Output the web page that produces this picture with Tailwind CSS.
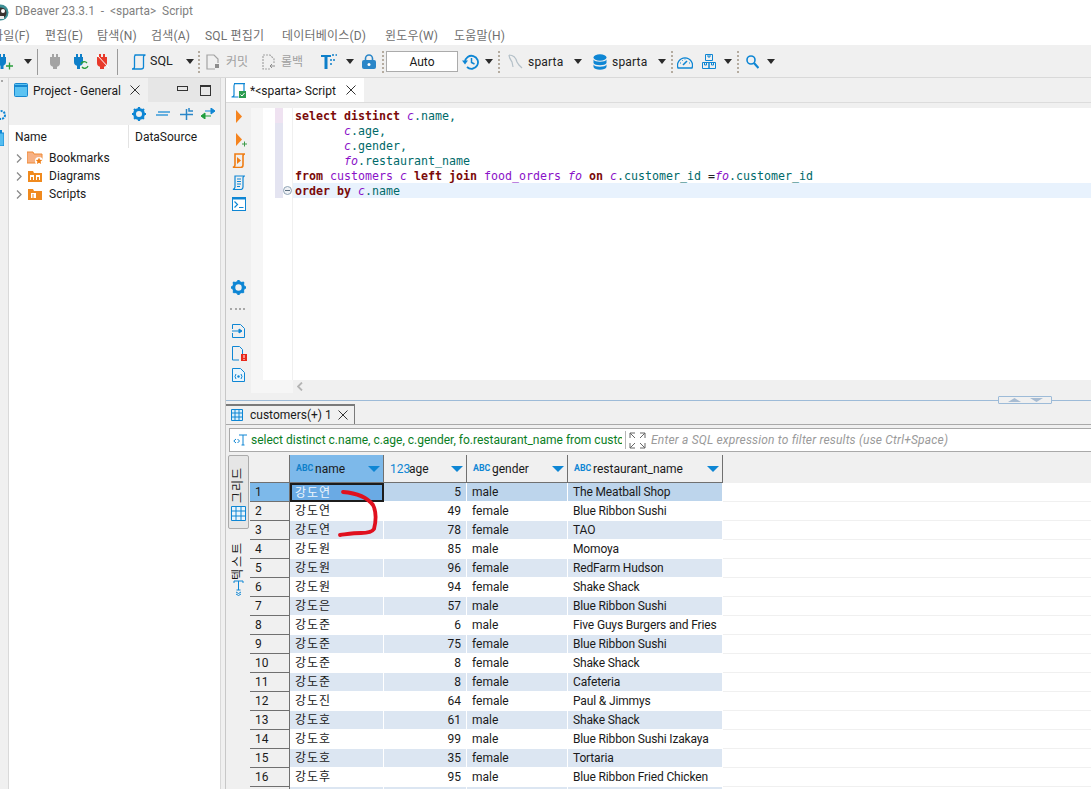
<!DOCTYPE html>
<html lang="ko">
<head>
  <meta charset="utf-8" />
  <title>DBeaver 23.3.1 - &lt;sparta&gt; Script</title>
  <script src="https://cdn.jsdelivr.net/npm/@tailwindcss/browser@4"></script>
</head>
<body class="bg-[#f0f0f0] text-[#1a1a1a] text-[12px] font-['Roboto','Noto_Sans_CJK_KR',sans-serif]">
<div class="relative w-[1091px] h-[789px] overflow-hidden flex flex-col">

  <!-- title bar -->
  <div class="h-[22px] pt-[2px] bg-white flex items-center text-[#7f7f7f] shrink-0">
    <svg class="ml-[-8px] shrink-0" width="17" height="17" viewBox="0 0 17 17"><circle cx="8.500" cy="8.500" r="8" fill="#3d8f95"/><circle cx="9" cy="9" r="5.500" fill="#3a3330"/><circle cx="11" cy="7" r="2" fill="#fff"/><path d="M7 12h5v3H7z" fill="#eee"/></svg>
    <span class="ml-[6px] whitespace-pre text-[11.900px]">DBeaver 23.3.1  -  &lt;sparta&gt;  Script</span>
  </div>

  <!-- menu -->
  <div class="h-[23px] pt-[5px] bg-white flex items-center text-[#6f6f6f] shrink-0 whitespace-nowrap tracking-[0.2px]">
    <span class="ml-[-8px] w-[53px]">파일(F)</span>
    <span class="w-[52px]">편집(E)</span>
    <span class="w-[54px]">탐색(N)</span>
    <span class="w-[54px]">검색(A)</span>
    <span class="w-[77px]">SQL 편집기</span>
    <span class="w-[103px]">데이터베이스(D)</span>
    <span class="w-[69px]">윈도우(W)</span>
    <span>도움말(H)</span>
  </div>

  <!-- main toolbar -->
  <div class="h-[33px] pt-[1px] flex items-center border-b border-[#d9d9d9] shrink-0 whitespace-nowrap">
    <svg class="ml-[-2px] shrink-0" width="15" height="16" viewBox="0 0 15 16"><path d="M1 0h2v3h2V0h2v3h1v5a4 4 0 0 1-2.500 3.800V15h-3v-3.200A4 4 0 0 1 0 8V3h1z" fill="#0e7fc9"/><path d="M8 12h7M11.500 8.500v7" stroke="#2a9d3c" stroke-width="1.300"/></svg>
    <svg class="ml-[11px] shrink-0" width="8" height="5" viewBox="0 0 8 5"><path d="M0 0h8L4 5z" fill="#2b2b2b"/></svg>
    <div class="ml-[5px] w-px h-[26px] bg-[#9a9a9a] shrink-0"></div>
    <svg class="ml-[12px] shrink-0" width="10" height="15" viewBox="0 0 10 15"><path d="M2 0h2v3h2V0h2v3h2v6a4 4 0 0 1-3 3.800V15H3v-2.200A4 4 0 0 1 0 9V3h2z" fill="#a3a3a3"/></svg>
    <svg class="ml-[13px] shrink-0" width="16" height="16" viewBox="0 0 16 16"><path d="M3 0h2v3h2V0h2v3h1v5a4 4 0 0 1-3 3.800V15H4v-3.200A4 4 0 0 1 1 8V3h2z" fill="#0e7fc9"/><path d="M8 10a3.500 3.500 0 0 1 6-1M15 12a3.500 3.500 0 0 1-6 1" fill="none" stroke="#2a9d3c" stroke-width="1.300"/></svg>
    <svg class="ml-[8px] shrink-0" width="12" height="15" viewBox="0 0 12 15"><path d="M2 0h2v3h2V0h2v3h2v6a4 4 0 0 1-3 3.800V15H3v-2.200A4 4 0 0 1 0 9V3h2z" fill="#e8392a"/><path d="M0 1l12 13" stroke="#fff" stroke-width="1"/></svg>
    <div class="ml-[8px] w-px h-[26px] bg-[#9a9a9a] shrink-0"></div>
    <svg class="ml-[13px] shrink-0" width="16" height="16" viewBox="0 0 16 16"><path d="M3.500 1h11M5 1c-1 0-1.500 1-1.500 2v10c0 1-1 2-2.500 2h9c1.500 0 2.500-1 2.500-2V3c0-1 1-2 2-2" fill="none" stroke="#0e86d4" stroke-width="1.300"/></svg>
    <span class="ml-[3px] w-[22px] text-[#222] text-[12.500px]">SQL</span>
    <svg class="ml-[14px] shrink-0" width="8" height="5" viewBox="0 0 8 5"><path d="M0 0h8L4 5z" fill="#2b2b2b"/></svg>
    <div class="ml-[4px] w-[2px] h-[22px] border-l-2 border-dotted border-[#b5aca0] shrink-0"></div>
    <svg class="ml-[6px] shrink-0" width="14" height="16" viewBox="0 0 14 16"><path d="M9 15H1V1h7l4 4v4" fill="none" stroke="#a3a3a3" stroke-width="1.200"/><path d="M9 10h4v4H9z" fill="#8d8d8d"/></svg>
    <span class="ml-[6px] w-[22px] text-[#a0a0a0]">커밋</span>
    <svg class="ml-[14px] shrink-0" width="14" height="16" viewBox="0 0 14 16"><path d="M8 15H1V1h7l4 4v4" fill="none" stroke="#a3a3a3" stroke-width="1.200" stroke-dasharray="2 1"/><path d="M8 12h5M10 10l-2 2 2 2" fill="none" stroke="#8d8d8d"/></svg>
    <span class="ml-[5px] w-[22px] text-[#a0a0a0]">롤백</span>
    <svg class="ml-[18px] shrink-0" width="16" height="16" viewBox="0 0 16 16"><path d="M0 1h10v2H6.500v12h-3V3H0z" fill="#0e7fc9"/><path d="M11 1h2M14.500 1h1.500M9 6h2M9 10h2M12 6h2" stroke="#0e7fc9" stroke-width="1.600"/></svg>
    <svg class="ml-[9px] shrink-0" width="8" height="5" viewBox="0 0 8 5"><path d="M0 0h8L4 5z" fill="#2b2b2b"/></svg>
    <svg class="ml-[8px] shrink-0" width="14" height="15" viewBox="0 0 14 15"><path d="M3.500 7V4.500a3.500 3.500 0 0 1 7 0V7" fill="none" stroke="#2a86c8" stroke-width="1.600"/><rect y="6" width="14" height="9" rx="2" fill="#2a86c8"/><circle cx="7" cy="10.500" r="1.500" fill="#fff"/></svg>
    <div class="ml-[6px] w-[2px] h-[22px] border-l-2 border-dotted border-[#b5aca0] shrink-0"></div>
    <div class="ml-[2px] w-[72px] h-[21px] bg-white border border-[#ababab] flex items-center justify-center shrink-0">Auto</div>
    <svg class="ml-[4px] shrink-0" width="17" height="16" viewBox="0 0 17 16"><path d="M3 8a6.500 6.500 0 1 1 2 5" fill="none" stroke="#0e86d4" stroke-width="1.800"/><path d="M0 6.500h6L3 10.500z" fill="#0e86d4"/><path d="M9.500 4v4.500l3 1.500" fill="none" stroke="#0e86d4" stroke-width="1.500"/></svg>
    <svg class="ml-[6px] shrink-0" width="8" height="5" viewBox="0 0 8 5"><path d="M0 0h8L4 5z" fill="#2b2b2b"/></svg>
    <div class="ml-[5px] w-[2px] h-[22px] border-l-2 border-dotted border-[#b5aca0] shrink-0"></div>
    <svg class="ml-[8px] shrink-0" width="15" height="15" viewBox="0 0 15 15"><path d="M1 1c4 0 7 3 8 7l2 3 3 3M1 1c0 3 2 5 3 7l1 5" fill="none" stroke="#b4c0c8" stroke-width="1.200"/></svg>
    <span class="ml-[5px] w-[32px] text-[#222] tracking-[0.2px]">sparta</span>
    <svg class="ml-[14px] shrink-0" width="8" height="5" viewBox="0 0 8 5"><path d="M0 0h8L4 5z" fill="#2b2b2b"/></svg>
    <svg class="ml-[11px] shrink-0" width="14" height="16" viewBox="0 0 14 16"><ellipse cx="7" cy="3.500" rx="6.500" ry="3.300" fill="#0e86d4"/><path d="M.5 5.500c1 3 12 3 13 0v3.500c-1 3-12 3-13 0zM.5 10.500c1 3 12 3 13 0V13c-1 3.500-12 3.500-13 0z" fill="#0e86d4"/></svg>
    <span class="ml-[5px] w-[32px] text-[#222] tracking-[0.2px]">sparta</span>
    <svg class="ml-[14px] shrink-0" width="8" height="5" viewBox="0 0 8 5"><path d="M0 0h8L4 5z" fill="#2b2b2b"/></svg>
    <div class="ml-[5px] w-[2px] h-[22px] border-l-2 border-dotted border-[#b5aca0] shrink-0"></div>
    <svg class="ml-[4px] shrink-0" width="16" height="14" viewBox="0 0 16 14"><path d="M1 13a7.500 7.500 0 1 1 14 0z" fill="none" stroke="#0e86d4" stroke-width="1.300"/><path d="M6 10l4-4" stroke="#0e86d4" stroke-width="1.600"/><path d="M3 8h1M5 5l.7.7M8 3.500v1M12 8h1" stroke="#0e86d4"/></svg>
    <svg class="ml-[9px] shrink-0" width="14" height="15" viewBox="0 0 14 15"><path d="M3.500.5h7v6h-7zM.5 8.500h6.500v6H.5zM7 8.500h6.500v6H7z" fill="none" stroke="#0e86d4"/><path d="M6 .5v2.500h2V.5M2.500 8.500V11h2V8.500M9.500 8.500V11h2V8.500" fill="none" stroke="#0e86d4"/></svg>
    <svg class="ml-[8px] shrink-0" width="8" height="5" viewBox="0 0 8 5"><path d="M0 0h8L4 5z" fill="#2b2b2b"/></svg>
    <div class="ml-[5px] w-[2px] h-[22px] border-l-2 border-dotted border-[#b5aca0] shrink-0"></div>
    <svg class="ml-[7px] shrink-0" width="13" height="14" viewBox="0 0 13 14"><circle cx="5" cy="5" r="4" fill="none" stroke="#0e86d4" stroke-width="1.600"/><path d="M8 8l4.500 5" stroke="#0e86d4" stroke-width="2.200"/></svg>
    <svg class="ml-[8px] shrink-0" width="8" height="5" viewBox="0 0 8 5"><path d="M0 0h8L4 5z" fill="#2b2b2b"/></svg>
  </div>

  <div class="flex-1 flex min-h-0">
    <!-- left edge strip, trimmed perspective icons -->
    <div class="w-[8px] shrink-0 flex flex-col">
      <div class="mt-[2px] ml-px w-[2px] h-[2px] bg-[#a8a8a8]"></div>
      <svg class="mt-[28px] ml-[-5px]" width="12" height="10" viewBox="0 0 12 10"><circle cx="6" cy="5" r="4" fill="none" stroke="#0e86d4" stroke-width="2" stroke-dasharray="2 1"/></svg>
      <svg class="mt-[10px] ml-[-8px]" width="12" height="16" viewBox="0 0 12 16"><rect y="3" width="12" height="13" fill="#55bdf0" stroke="#0e86d4"/><path d="M5 0h5v3H5z" fill="#0e86d4"/></svg>
    </div>

    <!-- project panel -->
    <div class="w-[213px] shrink-0 flex flex-col border-l border-r border-[#d9d9d9]">
      <div class="h-[24px] flex shrink-0 bg-[#e6e6e6]">
        <div class="w-[139px] bg-[#f0f0f0] flex items-center shrink-0">
          <svg class="ml-[5px] shrink-0" width="14" height="14" viewBox="0 0 14 14"><rect x=".5" y=".5" width="13" height="13" rx="1" fill="#5cc3f2" stroke="#1787cf"/><path d="M1 3h12" stroke="#1787cf" stroke-width="2"/></svg>
          <span class="ml-[5px] w-[97px] whitespace-nowrap pt-[1px]">Project - General</span>
          <svg class="shrink-0" width="10" height="10" viewBox="0 0 10 10"><path d="M.5.5l9 9M9.500.5l-9 9" stroke="#333"/></svg>
        </div>
        <div class="ml-[29px] w-[11px] h-[5px] mt-[8px] border border-[#333] shrink-0"></div>
        <div class="ml-[12px] w-[11px] h-[11px] mt-[7px] border border-[#333] border-t-2 shrink-0"></div>
      </div>
      <div class="h-[23px] flex items-center bg-[#f0f0f0] shrink-0">
        <svg class="ml-[123px] shrink-0" width="14" height="14" viewBox="0 0 14 14"><circle cx="7" cy="7" r="4.500" fill="none" stroke="#0e86d4" stroke-width="3"/><path d="M7 0v14M0 7h14M2 2l10 10M12 2L2 12" stroke="#0e86d4" stroke-width="2.200" stroke-dasharray="2.500 9"/></svg>
        <svg class="ml-[10px] shrink-0" width="14" height="6" viewBox="0 0 14 6"><path d="M2 1h12M0 4h12" stroke="#3a9ad9" stroke-width="1.400"/></svg>
        <svg class="ml-[10px] shrink-0" width="13" height="13" viewBox="0 0 13 13"><path d="M0 7.500h13M6.500 2v11M9 1v3h4" fill="none" stroke="#2a86c8" stroke-width="1.500"/></svg>
        <svg class="ml-[7px] shrink-0" width="16" height="11" viewBox="0 0 16 11"><path d="M5 3h9M11 0l4 3-4 3z" fill="#0e86d4" stroke="#0e86d4"/><path d="M11 8H2M5 5L1 8l4 3z" fill="#1f9d3d" stroke="#1f9d3d"/></svg>
      </div>
      <div class="flex-1 bg-white">
        <div class="h-[23px] flex items-center">
          <span class="ml-[6px] w-[113px]">Name</span>
          <div class="w-px h-[23px] bg-[#e3e3e3]"></div>
          <span class="ml-[6px]">DataSource</span>
        </div>
        <div class="pt-[1px]">
          <div class="h-[18px] flex items-center">
            <svg class="ml-[7px] shrink-0" width="6" height="9" viewBox="0 0 6 9"><path d="M1 .5l4 4-4 4" fill="none" stroke="#8a8a8a" stroke-width="1.300"/></svg>
            <svg class="ml-[5px] shrink-0" width="16" height="14" viewBox="0 0 16 14"><path d="M0 1h6l1 2h8v9H0z" fill="#f7b184" stroke="#ef8a34"/><circle cx="12" cy="10" r="4" fill="#fff"/><path d="M12 6.500l1 2.300 2.300.2-1.700 1.600.5 2.400-2.100-1.200-2.100 1.200.5-2.400L8.700 9l2.300-.2z" fill="#ef7d14"/></svg>
            <span class="ml-[6px]">Bookmarks</span>
          </div>
          <div class="h-[18px] flex items-center">
            <svg class="ml-[7px] shrink-0" width="6" height="9" viewBox="0 0 6 9"><path d="M1 .5l4 4-4 4" fill="none" stroke="#8a8a8a" stroke-width="1.300"/></svg>
            <svg class="ml-[5px] shrink-0" width="16" height="13" viewBox="0 0 16 13"><path d="M1 1h5l1 2h8v9H1z" fill="#f08a1e"/><path d="M3 5h4v5H3zM9 5h4v5H9z" fill="#fff"/><path d="M4 7h2v3H4zM10 7h2v3h-2z" fill="#f08a1e"/></svg>
            <span class="ml-[6px]">Diagrams</span>
          </div>
          <div class="h-[18px] flex items-center">
            <svg class="ml-[7px] shrink-0" width="6" height="9" viewBox="0 0 6 9"><path d="M1 .5l4 4-4 4" fill="none" stroke="#8a8a8a" stroke-width="1.300"/></svg>
            <svg class="ml-[5px] shrink-0" width="16" height="13" viewBox="0 0 16 13"><path d="M1 1h5l1 2h8v9H1z" fill="#f08a1e"/><path d="M4 5h5v5H4z" fill="#fff"/><path d="M6 6v4" stroke="#f08a1e"/></svg>
            <span class="ml-[6px]">Scripts</span>
          </div>
        </div>
      </div>
    </div>

    <!-- right side -->
    <div class="flex-1 min-w-0 ml-[4px] border-l border-[#c8c8c8] flex flex-col">
      <div class="h-[25px] flex border-b border-[#dcdcdc] shrink-0">
        <div class="w-[138px] h-[24px] bg-white flex items-center">
          <svg class="ml-[5px] shrink-0" width="15" height="15" viewBox="0 0 15 15"><path d="M3 .7h11M4 1C3 1 3 2 3 3v9c0 1-1 2-2.500 2h7" fill="none" stroke="#0e86d4" stroke-width="1.200"/><path d="M13 1v7" stroke="#0e86d4" stroke-width="1.200"/><rect x="8" y="8" width="7" height="7" fill="#2c9c50"/><path d="M9.500 11.500l1.500 1.500 2.500-3" fill="none" stroke="#fff"/></svg>
          <span class="ml-[4px] w-[96px] whitespace-nowrap pt-[1px]">*&lt;sparta&gt; Script</span>
          <svg class="shrink-0" width="10" height="10" viewBox="0 0 10 10"><path d="M.5.5l9 9M9.500.5l-9 9" stroke="#333"/></svg>
        </div>
      </div>
      <div class="h-[5px] shrink-0"></div>

      <!-- SQL editor -->
      <div class="h-[285px] flex shrink-0">
        <div class="w-[25px] flex flex-col shrink-0 items-start">
          <svg class="ml-[10px] mt-[2px]" width="6" height="13" viewBox="0 0 6 13"><path d="M0 0l6 6.500L0 13z" fill="#f5841f"/></svg>
          <svg class="ml-[10px] mt-[10px]" width="11" height="14" viewBox="0 0 11 14"><path d="M0 0l6 6.500L0 13z" fill="#f5841f"/><path d="M6 11h5M8.500 8.500v5" stroke="#3b9a49"/></svg>
          <svg class="ml-[6px] mt-[6px]" width="14" height="15" viewBox="0 0 14 15"><path d="M3 1h10c-1.500 0-2 1-2 2v9c0 1.500-1 2.500-2.500 2.500H1C2 14 3 13 3 12z" fill="none" stroke="#ef7d14" stroke-width="1.600"/><path d="M5 4l4 3.500L5 11z" fill="#ef7d14"/></svg>
          <svg class="ml-[6px] mt-[7px]" width="14" height="15" viewBox="0 0 14 15"><path d="M3 1h10c-1.500 0-2 1-2 2v9c0 1.500-1 2.500-2.500 2.500H1C2 14 3 13 3 12z" fill="none" stroke="#0e86d4" stroke-width="1.200"/><path d="M5 4h4M5 6.500h4M5 9h4M5 11.500h3" stroke="#0e86d4"/></svg>
          <svg class="ml-[6px] mt-[7px]" width="14" height="14" viewBox="0 0 14 14"><rect x=".5" y=".5" width="13" height="13" fill="#fff" stroke="#0e86d4"/><path d="M0 1.500h14" stroke="#0e86d4" stroke-width="2"/><path d="M2.500 4.500l3 3-3 3M7 10.500h4.500" fill="none" stroke="#0e86d4" stroke-width="1.200"/></svg>
          <svg class="ml-[5px] mt-[69px]" width="15" height="15" viewBox="0 0 14 14"><circle cx="7" cy="7" r="4.500" fill="none" stroke="#0e86d4" stroke-width="3"/><path d="M7 0v14M0 7h14M2 2l10 10M12 2L2 12" stroke="#0e86d4" stroke-width="2.200" stroke-dasharray="2.500 9"/></svg>
          <div class="ml-[4px] mt-[13px] w-[15px] border-t-2 border-dotted border-[#a8a8a8]"></div>
          <svg class="ml-[6px] mt-[14px]" width="13" height="14" viewBox="0 0 13 14"><path d="M.5 5V.5h8l4 4v9H.5V9" fill="none" stroke="#0e86d4"/><path d="M0 7h9M7 5l3 2-3 2z" fill="#0e86d4" stroke="#0e86d4"/></svg>
          <svg class="ml-[6px] mt-[8px]" width="15" height="15" viewBox="0 0 15 15"><path d="M7 14H.5V.5h7l3 3V8" fill="none" stroke="#0e86d4"/><rect x="9" y="8" width="6" height="7" fill="#e8291c"/><path d="M12 9v3M12 13v1" stroke="#fff"/></svg>
          <svg class="ml-[6px] mt-[7px]" width="13" height="14" viewBox="0 0 13 14"><path d="M.5.500h8l4 4v9H.5z" fill="#eaf5fc" stroke="#0e86d4"/><path d="M4 6L3 8.500 4 11M9 6l1 2.500L9 11" fill="none" stroke="#0e86d4"/><circle cx="6.500" cy="8.500" r="1.200" fill="#0e86d4"/></svg>
        </div>
        <div class="w-[12px] bg-[#f6f6f6] shrink-0"></div>
        <div class="flex-1 min-w-0 flex flex-col">
          <div class="h-[272px] flex bg-white shrink-0">
            <div class="relative w-[30px] shrink-0 border-r border-[#f0f0f0]">
              <div class="ml-[12px] w-[8px] h-[15px] bg-[#efe2f1]"></div>
              <div class="ml-[12px] w-[8px] h-[75px] bg-[#e4e4f1]"></div>
              <div class="absolute left-[20px] top-[78px] w-[9px] h-[9px] rounded-full border border-[#8fa3b5] bg-[#eef1f5] flex items-center justify-center"><div class="w-[5px] h-px bg-[#5c6f80]"></div></div>
            </div>
            <pre class="flex-1 min-w-0 text-[11.630px] leading-[17px] font-['DejaVu_Sans_Mono',monospace] text-[#006a6a]"><div class="pl-[2px] h-[15px]"><b class="text-[#7a0a0a]">select distinct</b> <i class="text-[#8a12c8]">c</i>.name,</div><div class="pl-[2px] h-[15px]">       <i class="text-[#8a12c8]">c</i>.age,</div><div class="pl-[2px] h-[15px]">       <i class="text-[#8a12c8]">c</i>.gender,</div><div class="pl-[2px] h-[15px]">       <i class="text-[#8a12c8]">fo</i>.restaurant_name</div><div class="pl-[2px] h-[15px]"><b class="text-[#7a0a0a]">from</b> <span class="text-[#8a12c8]">customers</span> <i class="text-[#8a12c8]">c</i> <b class="text-[#7a0a0a]">left join</b> <span class="text-[#8a12c8]">food_orders</span> <i class="text-[#8a12c8]">fo</i> <b class="text-[#7a0a0a]">on</b> <i class="text-[#8a12c8]">c</i>.customer_id <span class="text-[#222]">=</span><i class="text-[#8a12c8]">fo</i>.customer_id</div><div class="pl-[2px] h-[15px] bg-[#e8f2fd]"><b class="text-[#7a0a0a]">order by</b> <i class="text-[#8a12c8]">c</i>.name</div></pre>
          </div>
          <div class="h-[13px] flex shrink-0">
            <div class="w-[30px] bg-[#f6f6f6] shrink-0"></div>
            <svg class="ml-[4px] mt-[2px]" width="6" height="9" viewBox="0 0 6 9"><path d="M5 .5L1 4.500l4 4" fill="none" stroke="#b4b4b4" stroke-width="1.800"/></svg>
          </div>
        </div>
      </div>

      <!-- sash -->
      <div class="h-[11px] shrink-0">
        <div class="mt-[3px] h-[8px] flex items-center">
          <div class="w-[772px] h-px bg-[#9dbbd8]"></div>
          <div class="w-[54px] h-[8px] border border-[#9dbbd8] rounded-[1px] flex items-center justify-center gap-[9px] shrink-0">
            <svg width="13" height="4" viewBox="0 0 13 4"><path d="M0 4h13L6.500 0z" fill="#a8bcd2"/></svg>
            <svg width="13" height="4" viewBox="0 0 13 4"><path d="M0 0h13L6.500 4z" fill="#a8bcd2"/></svg>
          </div>
          <div class="flex-1 h-px bg-[#9dbbd8]"></div>
        </div>
      </div>

      <!-- results tab -->
      <div class="h-[21px] flex border-b border-[#a9a9a9] shrink-0">
        <div class="w-[129px] h-[20px] border-t-2 border-r border-[#7a7a7a] flex items-center">
          <svg class="ml-[5px] shrink-0" width="12" height="12" viewBox="0 0 12 12"><path d="M.5.500h11v11H.5zM4 .5v11M8 .5v11M.5 4h11M.5 8h11" fill="#d9effb" stroke="#0e86d4"/></svg>
          <span class="ml-[7px] w-[88px] whitespace-nowrap">customers(+) 1</span>
          <svg class="shrink-0" width="10" height="10" viewBox="0 0 10 10"><path d="M.5.5l9 9M9.500.5l-9 9" stroke="#333"/></svg>
        </div>
      </div>

      <!-- filter -->
      <div class="mt-[3px] ml-[3px] h-[24px] bg-white border border-[#a9a9a9] border-r-0 flex items-center shrink-0 whitespace-nowrap">
        <svg class="ml-[3px] shrink-0" width="14" height="12" viewBox="0 0 14 12"><path d="M3 5L.8 7 3 9M4.500 5l2 2-2 2" fill="none" stroke="#0e86d4"/><path d="M6 1h8M10 1v10M8.500 11h3" fill="none" stroke="#0e86d4"/></svg>
        <div class="ml-[4px] w-[371px] overflow-hidden text-[#0a7d1e] shrink-0">select distinct c.name, c.age, c.gender, fo.restaurant_name from customers c</div>
        <div class="ml-[3px] w-px h-[18px] bg-[#b5b5b5] shrink-0"></div>
        <svg class="ml-[3px] shrink-0" width="17" height="17" viewBox="0 0 17 17"><path d="M1 6V1h5M16 6V1h-5M1 11v5h5M16 11v5h-5M1 1l5 5M16 1l-5 5M1 16l5-5M16 16l-5-5" fill="none" stroke="#666"/></svg>
        <span class="ml-[5px] italic text-[#9a9a9a] tracking-[0.18px]">Enter a SQL expression to filter results (use Ctrl+Space)</span>
      </div>

      <!-- result grid -->
      <div class="mt-[3px] flex flex-1 min-h-0">
        <div class="ml-[1px] mr-px w-[22px] shrink-0 flex flex-col items-center">
          <div class="w-[21px] h-[74px] bg-[#e6e6e6] border border-[#ababab] rounded-[2px] flex flex-col items-center shrink-0">
            <span class="mt-[8px] h-[39px] [writing-mode:vertical-rl] [text-orientation:sideways] rotate-180 leading-[19px] tracking-[1px]">그리드</span>
            <svg class="mt-[3px]" width="15" height="15" viewBox="0 0 15 15"><path d="M.5.500h14v14H.5zM5 .5v14M10 .5v14M.5 5h14M.5 10h14" fill="#e9f5fc" stroke="#0e86d4"/></svg>
          </div>
          <span class="mt-[10px] h-[41px] [writing-mode:vertical-rl] [text-orientation:sideways] rotate-180 leading-[19px] tracking-[2px]">텍스트</span>
          <svg width="13" height="16" viewBox="0 0 13 16"><path d="M2 1h9M6.500 1v9M4.500 10h4M2 1v2M11 1v2" fill="none" stroke="#0e86d4"/><path d="M4 12l2.500 1.500L9 12M4 14l2.500 1.500L9 14" fill="none" stroke="#0e86d4"/></svg>
        </div>
        <div id="result-grid" class="flex-1 min-w-0 grid grid-cols-[40px_94px_83px_101px_155px_1fr] auto-rows-[19px] [grid-template-rows:28px] content-start">
          <div class="bg-[#f0f0f0] border-r border-b border-[#707070]"></div>
          <div class="bg-[#7db9ea] border-r border-b border-[#707070] flex items-center">
            <span class="ml-[6px] w-[19px] text-[8.800px] font-bold text-[#0e7fc9]">ABC</span><span class="flex-1">name</span>
            <svg class="mr-[3px]" width="12" height="6" viewBox="0 0 12 6"><path d="M0 0h12L6 6z" fill="#0e86d4"/></svg>
          </div>
          <div class="border-r border-b border-[#707070] flex items-center">
            <span class="ml-[6px] w-[19px] text-[#0e86d4]">123</span><span class="flex-1">age</span>
            <svg class="mr-[3px]" width="12" height="6" viewBox="0 0 12 6"><path d="M0 0h12L6 6z" fill="#0e86d4"/></svg>
          </div>
          <div class="border-r border-b border-[#707070] flex items-center">
            <span class="ml-[6px] w-[19px] text-[8.800px] font-bold text-[#0e86d4]">ABC</span><span class="flex-1">gender</span>
            <svg class="mr-[3px]" width="12" height="6" viewBox="0 0 12 6"><path d="M0 0h12L6 6z" fill="#0e86d4"/></svg>
          </div>
          <div class="border-r border-b border-[#707070] flex items-center">
            <span class="ml-[6px] w-[19px] text-[8.800px] font-bold text-[#0e86d4]">ABC</span><span class="flex-1">restaurant_name</span>
            <svg class="mr-[3px]" width="12" height="6" viewBox="0 0 12 6"><path d="M0 0h12L6 6z" fill="#0e86d4"/></svg>
          </div>
          <div></div>
        </div>
      </div>
    </div>
  </div>

  <!-- hand-drawn annotation on top of the screenshot -->
  <svg class="absolute left-[335px] top-[488px]" width="45" height="52" viewBox="0 0 45 52"><path d="M8 4C20 5 32 9 38 17c3 6 3 16 1 24-2 3-8 4-13 4-7 0-13 1-21 2" fill="none" stroke="#e0101e" stroke-width="3.800" stroke-linecap="round"/></svg>
</div>

<script>
  const rows = [
    ['강도연', 5, 'male', 'The Meatball Shop'],
    ['강도연', 49, 'female', 'Blue Ribbon Sushi'],
    ['강도연', 78, 'female', 'TAO'],
    ['강도원', 85, 'male', 'Momoya'],
    ['강도원', 96, 'female', 'RedFarm Hudson'],
    ['강도원', 94, 'female', 'Shake Shack'],
    ['강도은', 57, 'male', 'Blue Ribbon Sushi'],
    ['강도준', 6, 'male', 'Five Guys Burgers and Fries'],
    ['강도준', 75, 'female', 'Blue Ribbon Sushi'],
    ['강도준', 8, 'female', 'Shake Shack'],
    ['강도준', 8, 'female', 'Cafeteria'],
    ['강도진', 64, 'female', 'Paul &amp; Jimmys'],
    ['강도호', 61, 'male', 'Shake Shack'],
    ['강도호', 99, 'male', 'Blue Ribbon Sushi Izakaya'],
    ['강도호', 35, 'female', 'Tortaria'],
    ['강도후', 95, 'male', 'Blue Ribbon Fried Chicken'],
    ['', '', '', '']
  ];
  const grid = document.getElementById('result-grid');
  let html = '';
  rows.forEach((r, i) => {
    const first = i === 0;
    const bg = first ? 'bg-[#bdd5ec]' : (i % 2 === 0 ? 'bg-[#dce6f2]' : 'bg-white');
    const cell = 'border-r border-b border-white flex items-center whitespace-nowrap overflow-hidden ' + bg;
    html += `
      <div class="border-r border-b border-[#707070] pl-[5px] flex items-center ${first ? 'bg-[#7db9ea]' : 'bg-[#f0f0f0]'}">${i < 16 ? i + 1 : ''}</div>
      <div class="tracking-[1px] ${first ? 'bg-[#6aaae4] border-2 border-[#1c1c1c] pl-[3px] text-[#eef5fc] flex items-center' : cell + ' pl-[5px]'}">${r[0]}</div>
      <div class="${cell} justify-end pr-[5px]">${r[1]}</div>
      <div class="${cell} pl-[5px]">${r[2]}</div>
      <div class="${cell} pl-[5px] tracking-[-0.15px]">${r[3]}</div>
      <div class="border-b border-[#f0f0f0] bg-white"></div>`;
  });
  grid.insertAdjacentHTML('beforeend', html);
</script>
</body>
</html>
